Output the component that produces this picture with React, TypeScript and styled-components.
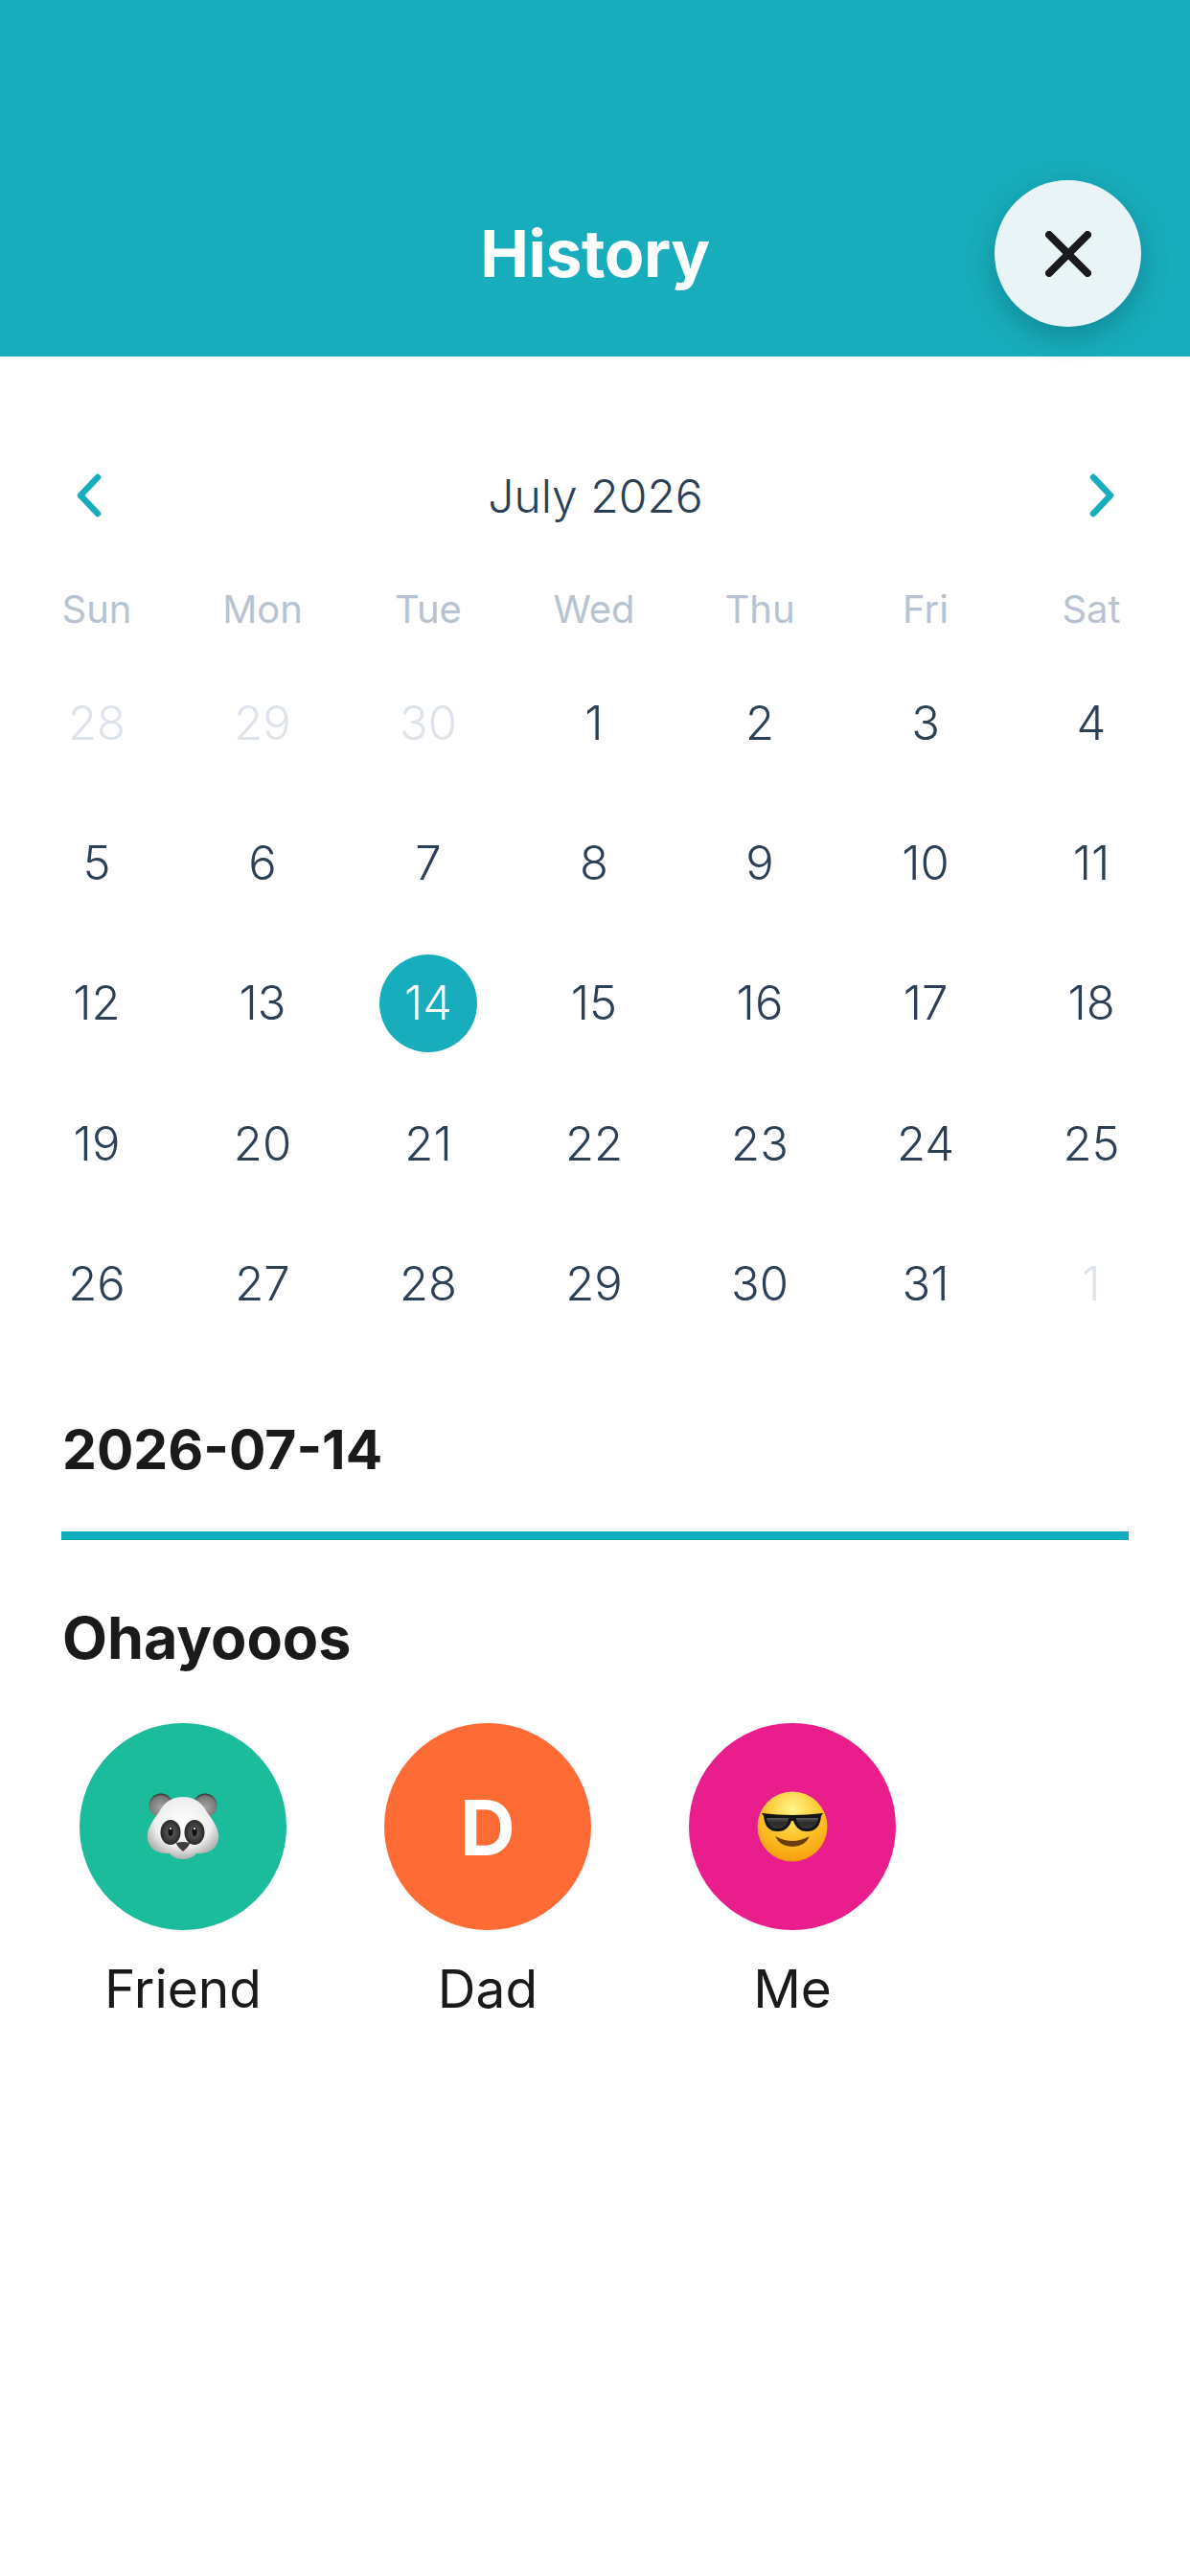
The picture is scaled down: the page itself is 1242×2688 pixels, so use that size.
import {createGlobalStyle, styled} from "styled-components";

const GlobalStyle = createGlobalStyle`
    html, body {
        margin: 0;
        padding: 0;
        background: #ffffff;
        font-family: Inter, "Liberation Sans", sans-serif;
    }
`

const Page = styled.div`
    width: 1242px;
    height: 2688px;
    display: flex;
    flex-direction: column;
    background: #ffffff;
    overflow: hidden;
`

//header start
const Header = styled.header`
    position: relative;
    height: 372px;
    flex: none;
    box-sizing: border-box;
    padding-top: 156px;
    display: flex;
    justify-content: center;
    align-items: center;
    background: #18adbc;
`
const Title = styled.h1`
    margin: 0;
    color: #ffffff;
    font-size: 68px;
    font-weight: 700;
    letter-spacing: -0.5px;
`
const CloseButton = styled.button`
    position: absolute;
    left: 1038px;
    top: 188px;
    width: 153px;
    height: 153px;
    padding: 0;
    border: none;
    border-radius: 50%;
    background: #e8f4f6;
    box-shadow: 0 10px 30px rgba(0, 50, 60, 0.3);
    display: flex;
    align-items: center;
    justify-content: center;
`
//header end

const Calendar = styled.section`
    box-sizing: border-box;
    padding: 110px 14.5px 0 14.5px;
    display: flex;
    flex-direction: column;
`
const MonthRow = styled.div`
    height: 70px;
    padding: 0 62px 0 63px;
    display: flex;
    align-items: center;
    justify-content: space-between;
`
const MonthLabel = styled.span`
    color: #2b3f55;
    font-size: 48px;
    font-weight: 300;
`
const Grid = styled.div`
    display: grid;
    grid-template-columns: repeat(7, 173px);
`
const WeekDay = styled.div`
    height: 78px;
    margin: 44px 0 7px 0;
    display: flex;
    align-items: center;
    justify-content: center;
    color: #b8c3d1;
    font-size: 40px;
    font-weight: 400;
`
const DayCell = styled.div`
    height: 146.3px;
    display: flex;
    align-items: center;
    justify-content: center;
`
const DayNumber = styled.span<{$muted?: boolean; $selected?: boolean}>`
    width: 102px;
    height: 102px;
    border-radius: 50%;
    display: flex;
    align-items: center;
    justify-content: center;
    font-size: 49px;
    font-weight: 300;
    color: ${(p) => (p.$selected ? "#ffffff" : p.$muted ? "#dde3ea" : "#2b3f55")};
    background: ${(p) => (p.$selected ? "#18adbc" : "transparent")};
`

const Details = styled.section`
    padding: 0 64px;
    display: flex;
    flex-direction: column;
`
const DateLabel = styled.h2`
    margin: 0;
    padding: 67px 0 0 1px;
    height: 68px;
    color: #1a1a1c;
    font-size: 57px;
    line-height: 68px;
    font-weight: 700;
`
const Divider = styled.div`
    height: 9px;
    margin-top: 51px;
    background: #10acbd;
`
const SectionTitle = styled.h3`
    margin: 0;
    padding: 63px 0 0 1px;
    color: #1a1a1c;
    font-size: 61px;
    line-height: 78px;
    font-weight: 700;
`
const People = styled.div`
    margin-top: 50px;
    padding-left: 19px;
    display: flex;
    gap: 102px;
`
const Person = styled.div`
    width: 216px;
    display: flex;
    flex-direction: column;
    align-items: center;
`
const Avatar = styled.div<{$color: string}>`
    width: 216px;
    height: 216px;
    border-radius: 50%;
    display: flex;
    align-items: center;
    justify-content: center;
    background: ${(p) => p.$color};
    color: #ffffff;
    font-size: 80px;
    font-weight: 700;
`
const PersonName = styled.span`
    margin-top: 28px;
    color: #1a1a1c;
    font-size: 55px;
    line-height: 66px;
    font-weight: 400;
`

function CloseIcon() {
    return (
        <svg width="48" height="48" viewBox="0 0 48 48" fill="none" stroke="#1a1a1c" strokeWidth="8" strokeLinecap="round">
            <path d="M4 4 L44 44 M44 4 L4 44"/>
        </svg>
    );
}

function Chevron({flip}: {flip?: boolean}) {
    return (
        <svg width="30" height="46" viewBox="0 0 30 46" fill="none" stroke="#18adbc" strokeWidth="6.5" strokeLinecap="round" strokeLinejoin="round">
            <path d={flip ? "M6 4 L24 23 L6 42" : "M24 4 L6 23 L24 42"}/>
        </svg>
    );
}

function PandaEmoji() {
    return (
        <svg width="76" height="70" viewBox="0 0 76 70">
            <defs>
                <radialGradient id="pandaFace" cx="50%" cy="42%" r="60%">
                    <stop offset="0%" stopColor="#ffffff"/>
                    <stop offset="65%" stopColor="#eeeeee"/>
                    <stop offset="100%" stopColor="#a9a9a9"/>
                </radialGradient>
                <radialGradient id="pandaEar" cx="50%" cy="60%" r="60%">
                    <stop offset="0%" stopColor="#a5a5a5"/>
                    <stop offset="80%" stopColor="#777777"/>
                    <stop offset="100%" stopColor="#2c2c2c"/>
                </radialGradient>
                <radialGradient id="pandaEye" cx="50%" cy="50%" r="55%">
                    <stop offset="0%" stopColor="#666666"/>
                    <stop offset="100%" stopColor="#222222"/>
                </radialGradient>
            </defs>
            <circle cx="15" cy="13" r="12.5" fill="url(#pandaEar)"/>
            <circle cx="61" cy="13" r="12.5" fill="url(#pandaEar)"/>
            <path d="M38 4 C50 4 58 10 63 20 C72 32 78 42 74 52 C70 62 60 63 52 63 C48 68 42 69 38 69 C34 69 28 68 24 63 C16 63 6 62 2 52 C-2 42 4 32 13 20 C18 10 26 4 38 4 Z" fill="url(#pandaFace)"/>
            <ellipse cx="25" cy="41" rx="10.5" ry="13" fill="url(#pandaEye)"/>
            <ellipse cx="50" cy="41" rx="10.5" ry="13" fill="url(#pandaEye)"/>
            <ellipse cx="25" cy="40" rx="2.5" ry="5" fill="#111111"/>
            <ellipse cx="50" cy="40" rx="2.5" ry="5" fill="#111111"/>
            <circle cx="25" cy="37" r="1.2" fill="#dddddd"/>
            <circle cx="50" cy="37" r="1.2" fill="#dddddd"/>
            <path d="M31 52 Q38 50 45 52 Q45 55 38 61 Q31 55 31 52 Z" fill="#3f3f3f"/>
        </svg>
    );
}

function CoolEmoji() {
    return (
        <svg width="74" height="74" viewBox="0 0 74 74">
            <defs>
                <radialGradient id="coolFace" cx="50%" cy="25%" r="78%">
                    <stop offset="0%" stopColor="#fff58a"/>
                    <stop offset="50%" stopColor="#fdc62f"/>
                    <stop offset="90%" stopColor="#f8a40f"/>
                    <stop offset="100%" stopColor="#e88f0a"/>
                </radialGradient>
                <linearGradient id="coolLens" x1="0" y1="0" x2="0" y2="1">
                    <stop offset="0%" stopColor="#5a5a5a"/>
                    <stop offset="45%" stopColor="#2a2a2a"/>
                    <stop offset="100%" stopColor="#3a3a3a"/>
                </linearGradient>
            </defs>
            <circle cx="37" cy="37" r="36.5" fill="url(#coolFace)"/>
            <path d="M5 23 Q37 27 69 23 L67 26 C66 36 62 42 52 42 C44 42 40 37 38 31 L36 31 C34 37 30 42 22 42 C12 42 8 36 7 26 Z" fill="#141414"/>
            <path d="M10 28 L33 28 C33 34 29 39 22 39 C14 39 11 34 10 28 Z" fill="url(#coolLens)"/>
            <path d="M41 28 L64 28 C63 34 60 39 52 39 C45 39 41 34 41 28 Z" fill="url(#coolLens)"/>
            <path d="M19 47 Q37 57 55 47 Q50 58 37 58 Q24 58 19 47 Z" fill="#6b3d0a"/>
        </svg>
    );
}

const weekDays = ["Sun", "Mon", "Tue", "Wed", "Thu", "Fri", "Sat"];

//june tail + july + first of august, the grid always shows 5 rows here
const days = [
    {n: 28, muted: true}, {n: 29, muted: true}, {n: 30, muted: true},
    ...Array.from({length: 31}, (_, i) => ({n: i + 1, muted: false})),
    {n: 1, muted: true},
];

export default function App() {
    return (
        <Page>
            <GlobalStyle/>
            <Header>
                <Title>History</Title>
                <CloseButton aria-label="close"><CloseIcon/></CloseButton>
            </Header>
            <Calendar>
                <MonthRow>
                    <Chevron/>
                    <MonthLabel>July 2026</MonthLabel>
                    <Chevron flip/>
                </MonthRow>
                <Grid>
                    {weekDays.map((d) => <WeekDay key={d}>{d}</WeekDay>)}
                    {days.map((d, i) => (
                        <DayCell key={i}>
                            <DayNumber $muted={d.muted} $selected={!d.muted && d.n === 14}>{d.n}</DayNumber>
                        </DayCell>
                    ))}
                </Grid>
            </Calendar>
            <Details>
                <DateLabel>2026-07-14</DateLabel>
                <Divider/>
                <SectionTitle>Ohayooos</SectionTitle>
                <People>
                    <Person>
                        <Avatar $color="#1abc9c"><PandaEmoji/></Avatar>
                        <PersonName>Friend</PersonName>
                    </Person>
                    <Person>
                        <Avatar $color="#ff6b35">D</Avatar>
                        <PersonName>Dad</PersonName>
                    </Person>
                    <Person>
                        <Avatar $color="#e91e8c"><CoolEmoji/></Avatar>
                        <PersonName>Me</PersonName>
                    </Person>
                </People>
            </Details>
        </Page>
    );
}
